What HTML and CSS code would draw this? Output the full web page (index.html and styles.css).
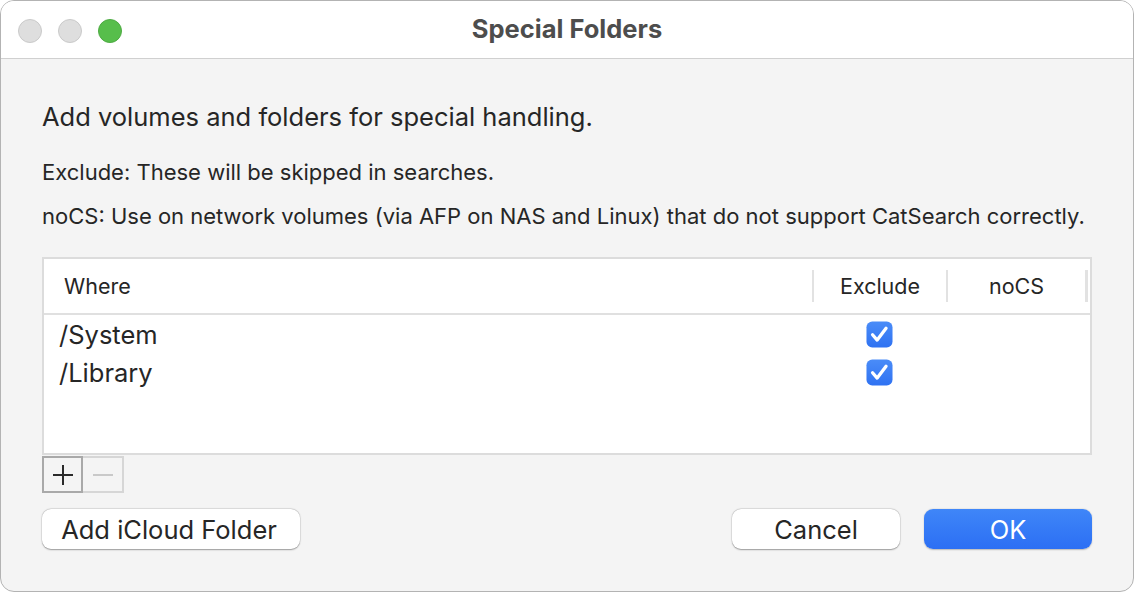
FILE: index.html
```html
<!DOCTYPE html>
<html>
<head>
<meta charset="utf-8">
<link rel="stylesheet" href="styles.css">
</head>
<body>
<div class="window">
  <div class="titlebar">
    <div class="lights">
      <span class="light gray"></span>
      <span class="light gray"></span>
      <span class="light green"></span>
    </div>
    <div class="title">Special Folders</div>
    <div></div>
  </div>
  <div class="content">
    <p class="heading">Add volumes and folders for special handling.</p>
    <p class="note first">Exclude: These will be skipped in searches.</p>
    <p class="note">noCS: Use on network volumes (via AFP on NAS and Linux) that do not support CatSearch correctly.</p>
    <div class="table">
      <div class="thead">
        <div class="th where">Where</div>
        <div class="th center">Exclude</div>
        <div class="th center">noCS</div>
      </div>
      <div class="row">
        <div class="cell where">/System</div>
        <div class="cell center"><svg class="check" viewBox="0 0 28 28"><defs><linearGradient id="g1" x1="0" y1="0" x2="0" y2="1"><stop offset="0" stop-color="#4a8cf8"/><stop offset="1" stop-color="#2f72f2"/></linearGradient></defs><rect x="0.5" y="0.5" width="27" height="27" rx="6" fill="url(#g1)"/><path d="M6.8 14.2 L11.6 19.8 L20.8 7.6" fill="none" stroke="#fff" stroke-width="3.4" stroke-linecap="round" stroke-linejoin="round"/></svg></div>
        <div class="cell center"></div>
      </div>
      <div class="row">
        <div class="cell where">/Library</div>
        <div class="cell center"><svg class="check" viewBox="0 0 28 28"><rect x="0.5" y="0.5" width="27" height="27" rx="6" fill="url(#g1)"/><path d="M6.8 14.2 L11.6 19.8 L20.8 7.6" fill="none" stroke="#fff" stroke-width="3.4" stroke-linecap="round" stroke-linejoin="round"/></svg></div>
        <div class="cell center"></div>
      </div>
    </div>
    <div class="pm">
      <button class="pmbtn plus"><svg viewBox="0 0 24 24" width="24" height="24"><path d="M12 2 V22 M2 12 H22" stroke="#2a2a2a" stroke-width="2"/></svg></button>
      <button class="pmbtn minus"><svg viewBox="0 0 24 24" width="24" height="24"><path d="M2 12 H22" stroke="#c9c9c9" stroke-width="2"/></svg></button>
    </div>
    <div class="actions">
      <button class="btn icloud">Add iCloud Folder</button>
      <div class="spacer"></div>
      <button class="btn cancel">Cancel</button>
      <button class="btn ok">OK</button>
    </div>
  </div>
</div>
</body>
</html>
```
FILE: styles.css
```css
html, body {
  margin: 0;
  padding: 0;
  background: #ffffff;
}
body {
  font-family: Inter, "Noto Sans", sans-serif;
  color: #262626;
}
.window {
  width: 1134px;
  height: 592px;
  box-sizing: border-box;
  border: 1.5px solid #b3b3b3;
  border-radius: 14px;
  overflow: hidden;
  background: #f4f4f4;
  display: flex;
  flex-direction: column;
}
.titlebar {
  height: 58px;
  flex: none;
  box-sizing: border-box;
  background: #ffffff;
  border-bottom: 1px solid #d0d0d0;
  display: grid;
  grid-template-columns: 1fr auto 1fr;
  align-items: center;
}
.lights {
  display: flex;
  gap: 16px;
  padding-left: 16.5px;
  padding-top: 2px;
}
.light {
  width: 24px;
  height: 24px;
  border-radius: 50%;
  box-sizing: border-box;
}
.light.gray {
  background: #dedede;
  border: 1px solid #cacaca;
}
.light.green {
  background: #57be4b;
  border: 1px solid #4eab43;
}
.title {
  font-size: 25.5px;
  font-weight: 700;
  color: #4d4d4d;
  line-height: 30px;
  padding-bottom: 1px;
}
.content {
  padding: 0 41px 0 41px;
  display: flex;
  flex-direction: column;
}
.heading {
  margin: 43px 0 0 0;
  font-size: 25.5px;
  line-height: 30px;
}
.note {
  margin: 20px 0 0 0;
  font-size: 22px;
  line-height: 24px;
}
.note.first {
  margin-top: 28px;
}
.table {
  margin-top: 29px;
  height: 198px;
  box-sizing: border-box;
  border: 2px solid #dcdcdc;
  background: #ffffff;
}
.thead {
  display: grid;
  grid-template-columns: 770px 134px 140px;
  height: 56px;
  box-sizing: border-box;
  border-bottom: 2px solid #e0e0e0;
  align-items: center;
}
.th {
  font-size: 21.5px;
  height: 32px;
  line-height: 32px;
  box-sizing: border-box;
}
.th.where {
  padding-left: 20px;
  border-right: 2px solid #e2e2e2;
}
.th.center {
  text-align: center;
  border-right: 2px solid #e2e2e2;
}
.th.center:last-child {
  border-right: 3px solid #e2e2e2;
}
.row {
  display: grid;
  grid-template-columns: 768px 134px 142px;
  height: 38px;
  align-items: center;
}
.cell {
  font-size: 25.5px;
}
.cell.where {
  padding-left: 15px;
}
.cell.center {
  display: flex;
  justify-content: center;
  align-items: center;
}
.check {
  width: 27px;
  height: 27px;
  display: block;
}
.pm {
  display: flex;
  margin-top: 1px;
}
.pmbtn {
  width: 41px;
  height: 37px;
  box-sizing: border-box;
  margin: 0;
  padding: 0;
  background: #f4f4f4;
  display: flex;
  align-items: center;
  justify-content: center;
}
.pmbtn.plus {
  border: 2px solid #a9a9a9;
}
.pmbtn.minus {
  border: 2px solid #d6d6d6;
  border-left: none;
}
.actions {
  display: flex;
  margin-top: 16px;
  align-items: center;
}
.spacer {
  flex: 1;
}
.btn {
  height: 40px;
  border-radius: 9px;
  font-family: Inter, "Noto Sans", sans-serif;
  font-size: 25.5px;
  color: #262626;
  border: none;
  padding: 0;
  margin: 0;
}
.icloud, .cancel {
  background: #ffffff;
  box-shadow: 0 0.5px 1.5px rgba(0,0,0,0.35), 0 0 0 0.5px rgba(0,0,0,0.08);
}
.icloud {
  width: 258px;
  padding-right: 4px;
}
.cancel {
  width: 168px;
}
.ok {
  width: 168px;
  margin-left: 24px;
  color: #ffffff;
  background: linear-gradient(#3f86f8, #2c6ff4);
  box-shadow: 0 0.5px 1.5px rgba(0,0,0,0.25);
}
```
